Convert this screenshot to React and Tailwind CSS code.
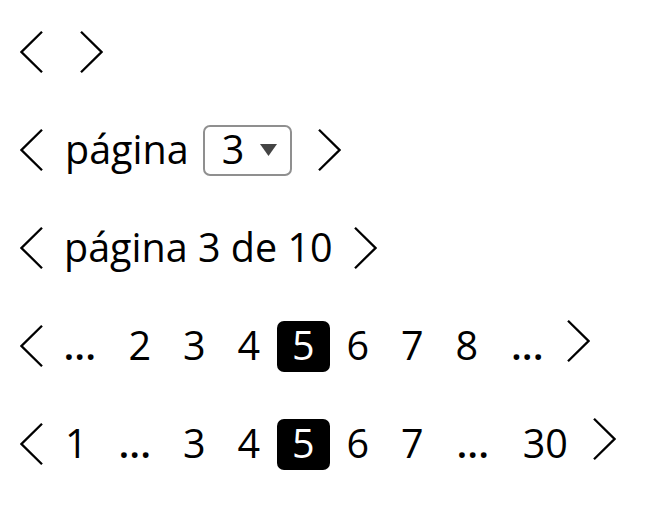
const font = { fontFamily: "'Open Sans', 'Noto Sans', sans-serif" };

function Chevron({ dir = "left", className = "" }) {
  const points = dir === "left" ? "22,0.8 1.5,21 22,41.2" : "1,0.8 21.5,21 1,41.2";
  return (
    <svg width="23" height="42" viewBox="0 0 23 42" className={`shrink-0 ${className}`}>
      <polyline points={points} fill="none" stroke="#000" strokeWidth="2.3" />
    </svg>
  );
}

function Cell({ children, active, className = "" }) {
  return (
    <div className={`w-[54.5px] shrink-0 flex justify-center ${className}`}>
      {active ? (
        <span className="w-[53px] h-[51px] bg-black text-white rounded-[7px] flex items-center justify-center">
          {children}
        </span>
      ) : (
        <span>{children}</span>
      )}
    </div>
  );
}

function Dots({ className = "" }) {
  return (
    <Cell className={className}>
      <span className="font-semibold">...</span>
    </Cell>
  );
}

export default function App() {
  return (
    <div className="w-[647px] h-[532px] bg-white text-black text-[39.5px] leading-none pt-[3px]" style={font}>
      <div className="h-[98px] flex items-center pl-[20px]">
        <Chevron dir="left" />
        <Chevron dir="right" className="ml-[37px]" />
      </div>

      <div className="h-[98px] flex items-center pl-[20px]">
        <Chevron dir="left" />
        <span className="ml-[22px]">página</span>
        <div className="ml-[14px] w-[89px] h-[51px] border-2 border-[#8f8f8f] rounded-[7px] flex items-center pl-[17px]">
          <span>3</span>
          <svg width="17" height="12" viewBox="0 0 17 12" className="ml-[16px]">
            <polygon points="0,0 17,0 8.5,12" fill="#444" />
          </svg>
        </div>
        <Chevron dir="right" className="ml-[26px]" />
      </div>

      <div className="h-[98px] flex items-center pl-[20px]">
        <Chevron dir="left" />
        <span className="ml-[21px]">página 3 de 10</span>
        <Chevron dir="right" className="ml-[21px]" />
      </div>

      <div className="h-[98px] flex items-center pl-[20px]">
        <Chevron dir="left" />
        <Dots className="ml-[9.5px]" />
        <Cell className="ml-[5.5px]">2</Cell>
        <Cell>3</Cell>
        <Cell>4</Cell>
        <Cell active>5</Cell>
        <Cell>6</Cell>
        <Cell>7</Cell>
        <Cell>8</Cell>
        <Dots className="ml-[6px]" />
        <Chevron dir="right" className="ml-[12px] -translate-y-[5px]" />
      </div>

      <div className="h-[98px] flex items-center pl-[20px]">
        <Chevron dir="left" />
        <Cell className="ml-[6px]">1</Cell>
        <Dots className="ml-[4px]" />
        <Cell className="ml-[5px]">3</Cell>
        <Cell>4</Cell>
        <Cell active>5</Cell>
        <Cell>6</Cell>
        <Cell>7</Cell>
        <Dots className="ml-[6px]" />
        <Cell className="ml-[18px]">30</Cell>
        <Chevron dir="right" className="ml-[20px] -translate-y-[5px]" />
      </div>
    </div>
  );
}
